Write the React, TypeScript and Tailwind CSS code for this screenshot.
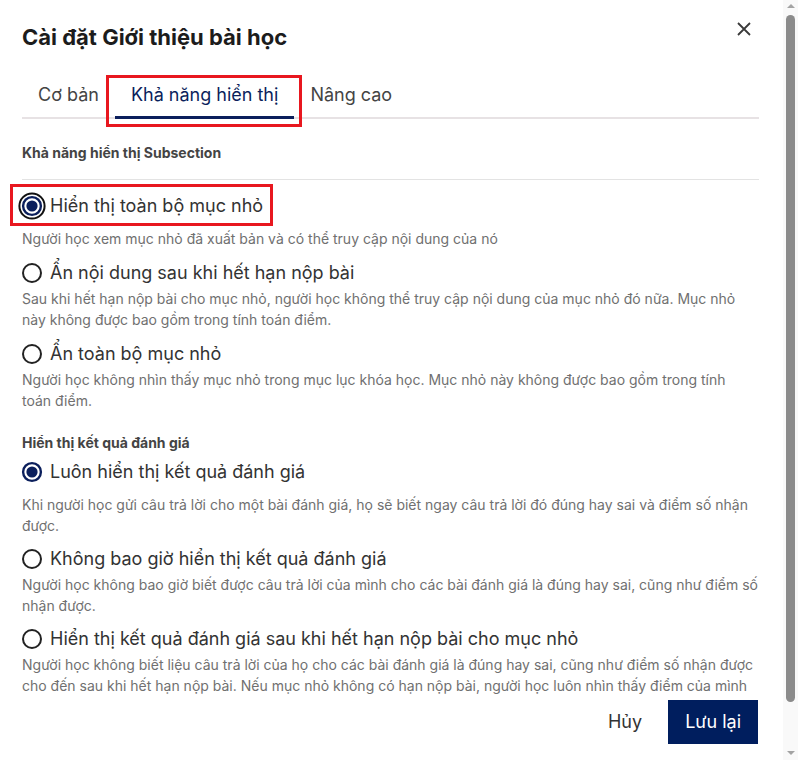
import React from "react";

const NAVY = "#0b1f5c";

type Option = {
  label: string;
  desc: string;
  selected?: boolean;
  focused?: boolean;
};

const visibility: Option[] = [
  {
    label: "Hiển thị toàn bộ mục nhỏ",
    desc: "Người học xem mục nhỏ đã xuất bản và có thể truy cập nội dung của nó",
    selected: true,
    focused: true,
  },
  {
    label: "Ẩn nội dung sau khi hết hạn nộp bài",
    desc: "Sau khi hết hạn nộp bài cho mục nhỏ, người học không thể truy cập nội dung của mục nhỏ đó nữa. Mục nhỏ này không được bao gồm trong tính toán điểm.",
  },
  {
    label: "Ẩn toàn bộ mục nhỏ",
    desc: "Người học không nhìn thấy mục nhỏ trong mục lục khóa học. Mục nhỏ này không được bao gồm trong tính toán điểm.",
  },
];

const results: Option[] = [
  {
    label: "Luôn hiển thị kết quả đánh giá",
    desc: "Khi người học gửi câu trả lời cho một bài đánh giá, họ sẽ biết ngay câu trả lời đó đúng hay sai và điểm số nhận được.",
    selected: true,
  },
  {
    label: "Không bao giờ hiển thị kết quả đánh giá",
    desc: "Người học không bao giờ biết được câu trả lời của mình cho các bài đánh giá là đúng hay sai, cũng như điểm số nhận được.",
  },
  {
    label: "Hiển thị kết quả đánh giá sau khi hết hạn nộp bài cho mục nhỏ",
    desc: "Người học không biết liệu câu trả lời của họ cho các bài đánh giá là đúng hay sai, cũng như điểm số nhận được cho đến sau khi hết hạn nộp bài. Nếu mục nhỏ không có hạn nộp bài, người học luôn nhìn thấy điểm của mình ngay sau khi gửi câu trả lời.",
  },
];

const RadioIcon: React.FC<{ selected?: boolean; focused?: boolean }> = ({ selected, focused }) => (
  <svg width="28" height="28" viewBox="0 0 28 28" className="shrink-0 -mx-1">
    {focused && <circle cx="14" cy="14" r="12.6" fill="none" stroke="#111" strokeWidth="2" />}
    {selected ? (
      <>
        <circle cx="14" cy="14" r="8.9" fill="none" stroke={NAVY} strokeWidth="2.4" />
        <circle cx="14" cy="14" r="5.6" fill={NAVY} />
      </>
    ) : (
      <circle cx="14" cy="14" r="9" fill="none" stroke="#222" strokeWidth="2" />
    )}
  </svg>
);

const RadioOption: React.FC<{ opt: Option; gap: string }> = ({ opt, gap }) => (
  <div className={gap}>
    <div className="relative flex h-[28px] items-center gap-[8px]">
      {opt.focused && (
        <div className="absolute -left-[12px] -top-[8px] h-[42px] w-[263px] border-[3px] border-[#e8171f]" />
      )}
      <RadioIcon selected={opt.selected} focused={opt.focused} />
      <span className="text-[18px] leading-[28px] text-[#333]">{opt.label}</span>
    </div>
    <p
      className={`${opt.selected ? "mt-[8px]" : "mt-[1px]"} pr-[1px] text-[14px] leading-[21px] text-[#707070]`}
    >
      {opt.desc}
    </p>
  </div>
);

const Scrollbar = () => (
  <div className="flex h-[760px] w-[15px] shrink-0 flex-col items-center bg-[#f9f9f9]">
    <svg width="10" height="15" viewBox="0 0 10 15">
      <path d="M1 8 L5 4 L9 8 Z" fill="#a3a3a3" />
    </svg>
    <div className="h-[687px] w-[9px] rounded-full bg-[#8b8b8b]" />
    <div className="flex-1" />
    <svg width="10" height="15" viewBox="0 0 10 15">
      <path d="M1 6 L5 10 L9 6 Z" fill="#a3a3a3" />
    </svg>
  </div>
);

export default function App() {
  return (
    <div
      className="flex h-[760px] w-[798px] overflow-hidden bg-white"
      style={{ fontFamily: "Inter, 'Noto Sans', sans-serif" }}
    >
      <div className="flex h-[760px] w-[783px] flex-col">
        <div className="min-h-0 flex-1 overflow-hidden pl-[22px] pr-[24px] pt-[23px]">
          <div className="flex items-center justify-between">
            <h1 className="text-[22px] font-bold leading-[28px] text-[#1c1c1c]">
              Cài đặt Giới thiệu bài học
            </h1>
            <svg width="16" height="16" viewBox="0 0 16 16" className="-mt-[16px] mr-[7px]">
              <path d="M2 2 L14 14 M14 2 L2 14" stroke="#3a3a3a" strokeWidth="1.8" />
            </svg>
          </div>

          <div className="mt-[20px] flex border-b-2 border-[#e7e2e4]">
            <div className="-mb-[2px] border-b-[3px] border-transparent px-4 pb-[9px] pt-[12px] text-[18px] leading-6 text-[#444]">
              Cơ bản
            </div>
            <div className="relative -mb-[2px] border-b-[3px] border-[#0b1f5c] px-4 pb-[9px] pt-[12px] text-[18px] leading-6 text-[#0b1f5c]">
              Khả năng hiển thị
              <div className="absolute -left-[9px] -right-[8px] top-[4px] -bottom-[11px] border-[3px] border-[#e8171f]" />
            </div>
            <div className="-mb-[2px] border-b-[3px] border-transparent px-4 pb-[9px] pt-[12px] text-[18px] leading-6 text-[#444]">
              Nâng cao
            </div>
          </div>

          <div className="mt-[24px] border-b border-[#e3e3e3] pb-[16px] text-[14px] font-bold leading-5 text-[#444]">
            Khả năng hiển thị Subsection
          </div>

          <div className="mt-[12px]">
            {visibility.map((o, i) => (
              <RadioOption key={o.label} opt={o} gap={i === 0 ? "" : "mt-[10px]"} />
            ))}
          </div>

          <div className="mt-[22px] text-[14px] font-bold leading-5 text-[#444]">
            Hiển thị kết quả đánh giá
          </div>

          <div className="mt-[5px]">
            {results.map((o, i) => (
              <RadioOption key={o.label} opt={o} gap={i === 0 ? "" : "mt-[9px]"} />
            ))}
          </div>
        </div>

        <div className="flex shrink-0 items-center justify-end gap-[10px] bg-white pb-[16px] pl-[22px] pr-[25px] pt-[4px]">
          <button className="px-4 text-[18px] leading-[44px] text-[#333]">Hủy</button>
          <button className="h-[44px] bg-[#001e5e] px-[17px] text-[18px] leading-[44px] text-white">
            Lưu lại
          </button>
        </div>
      </div>
      <Scrollbar />
    </div>
  );
}
